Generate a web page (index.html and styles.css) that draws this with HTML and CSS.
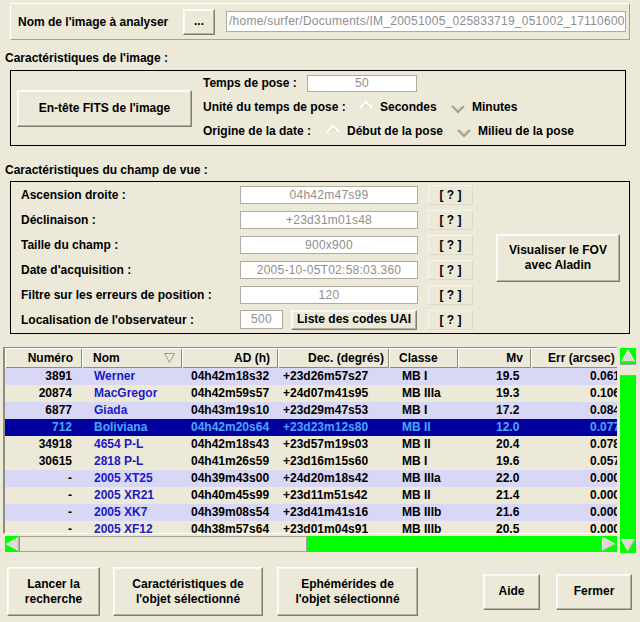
FILE: index.html
```html
<!DOCTYPE html>
<html lang="fr">
<head>
<meta charset="utf-8">
<title>Recherche d'objets</title>
<link rel="stylesheet" href="styles.css">
</head>
<body>
<div class="app">
  <div class="file-panel">
    <span class="file-label">Nom de l'image à analyser</span>
    <button class="btn btn-browse">...</button>
    <div class="field field-path">/home/surfer/Documents/IM_20051005_025833719_051002_17110600</div>
  </div>

  <div class="heading heading-image">Caractéristiques de l'image :</div>
  <div class="box box-image">
    <button class="btn btn-fits">En-tête FITS de l'image</button>
    <div class="image-fields">
      <div class="img-row">
        <span class="lbl lbl-pose">Temps de pose :</span>
        <div class="field field-pose">50</div>
      </div>
      <div class="img-row">
        <span class="lbl lbl-unit">Unité du temps de pose :</span>
        <span class="opt opt-sec"><svg class="diamond" viewBox="0 0 14 14" width="14" height="14"><path d="M1 8 L7 2 L13 8" fill="none" stroke="#ffffff" stroke-width="2"/><path d="M3.5 8 L7 4.5 L10.5 8" fill="none" stroke="#d4d1c2" stroke-width="1"/></svg>Secondes</span>
        <span class="opt"><svg class="diamond" viewBox="0 0 14 14" width="14" height="14"><path d="M1 6 L7 12 L13 6" fill="none" stroke="#a19f93" stroke-width="2"/><path d="M3.5 6 L7 9.5 L10.5 6" fill="none" stroke="#d4d1c2" stroke-width="1"/></svg>Minutes</span>
      </div>
      <div class="img-row">
        <span class="lbl lbl-origin">Origine de la date :</span>
        <span class="opt opt-debut"><svg class="diamond" viewBox="0 0 14 14" width="14" height="14"><path d="M1 8 L7 2 L13 8" fill="none" stroke="#ffffff" stroke-width="2"/><path d="M3.5 8 L7 4.5 L10.5 8" fill="none" stroke="#d4d1c2" stroke-width="1"/></svg>Début de la pose</span>
        <span class="opt"><svg class="diamond" viewBox="0 0 14 14" width="14" height="14"><path d="M1 6 L7 12 L13 6" fill="none" stroke="#a19f93" stroke-width="2"/><path d="M3.5 6 L7 9.5 L10.5 6" fill="none" stroke="#d4d1c2" stroke-width="1"/></svg>Milieu de la pose</span>
      </div>
    </div>
  </div>

  <div class="heading heading-fov">Caractéristiques du champ de vue :</div>
  <div class="box box-fov">
    <div class="fov-grid">
      <span class="lbl">Ascension droite :</span>
      <div class="field field-fov">04h42m47s99</div>
      <span></span>
      <span class="help">[ ? ]</span>

      <span class="lbl">Déclinaison :</span>
      <div class="field field-fov">+23d31m01s48</div>
      <span></span>
      <span class="help">[ ? ]</span>

      <span class="lbl">Taille du champ :</span>
      <div class="field field-fov">900x900</div>
      <span></span>
      <span class="help">[ ? ]</span>

      <span class="lbl">Date d'acquisition :</span>
      <div class="field field-fov">2005-10-05T02:58:03.360</div>
      <span></span>
      <span class="help">[ ? ]</span>

      <span class="lbl">Filtre sur les erreurs de position :</span>
      <div class="field field-fov">120</div>
      <span></span>
      <span class="help">[ ? ]</span>

      <span class="lbl">Localisation de l'observateur :</span>
      <div class="obs-cell">
        <div class="field field-obs">500</div>
        <button class="btn btn-uai">Liste des codes UAI</button>
      </div>
      <span></span>
      <span class="help">[ ? ]</span>
    </div>
    <button class="btn btn-fov">Visualiser le FOV<br>avec Aladin</button>
  </div>

  <div class="pane">
    <div class="viewport">
      <table class="grid">
        <colgroup>
          <col class="c-num"><col class="c-nom"><col class="c-ad"><col class="c-dec"><col class="c-cls"><col class="c-mv"><col class="c-err">
        </colgroup>
        <thead>
          <tr>
            <th class="h-num">Numéro</th>
            <th class="h-nom">Nom<svg class="sort" viewBox="0 0 11 10" width="11" height="10"><path d="M0.5 0.5 L10.5 0.5 L5.5 9.5 Z" fill="none" stroke="#9b9a92" stroke-width="1"/></svg></th>
            <th class="h-ad">AD (h)</th>
            <th class="h-dec">Dec. (degrés)</th>
            <th class="h-cls">Classe</th>
            <th class="h-mv">Mv</th>
            <th class="h-err">Err (arcsec)</th>
          </tr>
        </thead>
        <tbody>
          <tr class="alt"><td class="d-num">3891</td><td class="d-nom">Werner</td><td class="d-ad">04h42m18s32</td><td class="d-dec">+23d26m57s27</td><td class="d-cls">MB I</td><td class="d-mv">19.5</td><td class="d-err">0.061</td></tr>
          <tr><td class="d-num">20874</td><td class="d-nom">MacGregor</td><td class="d-ad">04h42m59s57</td><td class="d-dec">+24d07m41s95</td><td class="d-cls">MB IIIa</td><td class="d-mv">19.3</td><td class="d-err">0.106</td></tr>
          <tr class="alt"><td class="d-num">6877</td><td class="d-nom">Giada</td><td class="d-ad">04h43m19s10</td><td class="d-dec">+23d29m47s53</td><td class="d-cls">MB I</td><td class="d-mv">17.2</td><td class="d-err">0.084</td></tr>
          <tr class="sel"><td class="d-num">712</td><td class="d-nom">Boliviana</td><td class="d-ad">04h42m20s64</td><td class="d-dec">+23d23m12s80</td><td class="d-cls">MB II</td><td class="d-mv">12.0</td><td class="d-err">0.077</td></tr>
          <tr><td class="d-num">34918</td><td class="d-nom">4654 P-L</td><td class="d-ad">04h42m18s43</td><td class="d-dec">+23d57m19s03</td><td class="d-cls">MB II</td><td class="d-mv">20.4</td><td class="d-err">0.078</td></tr>
          <tr><td class="d-num">30615</td><td class="d-nom">2818 P-L</td><td class="d-ad">04h41m26s59</td><td class="d-dec">+23d16m15s60</td><td class="d-cls">MB I</td><td class="d-mv">19.6</td><td class="d-err">0.057</td></tr>
          <tr class="alt"><td class="d-num">-</td><td class="d-nom">2005 XT25</td><td class="d-ad">04h39m43s00</td><td class="d-dec">+24d20m18s42</td><td class="d-cls">MB IIIa</td><td class="d-mv">22.0</td><td class="d-err">0.000</td></tr>
          <tr><td class="d-num">-</td><td class="d-nom">2005 XR21</td><td class="d-ad">04h40m45s99</td><td class="d-dec">+23d11m51s42</td><td class="d-cls">MB II</td><td class="d-mv">21.4</td><td class="d-err">0.000</td></tr>
          <tr class="alt"><td class="d-num">-</td><td class="d-nom">2005 XK7</td><td class="d-ad">04h39m08s54</td><td class="d-dec">+23d41m41s16</td><td class="d-cls">MB IIIb</td><td class="d-mv">21.6</td><td class="d-err">0.000</td></tr>
          <tr><td class="d-num">-</td><td class="d-nom">2005 XF12</td><td class="d-ad">04h38m57s64</td><td class="d-dec">+23d01m04s91</td><td class="d-cls">MB IIIb</td><td class="d-mv">20.5</td><td class="d-err">0.000</td></tr>
        </tbody>
      </table>
    </div>

    <div class="vscroll">
      <div class="arrow arrow-up"><svg viewBox="0 0 16 16" width="16" height="16"><path d="M1.5 13.5 L8 2 L14.5 13.5 Z" fill="#dcdad0" stroke="#f4f3ee" stroke-width="1"/><path d="M1.5 13.5 L14.5 13.5" stroke="#a8a69c" stroke-width="1"/></svg></div>
      <div class="vthumb"></div>
      <div class="vtrack"></div>
      <div class="arrow arrow-down"><svg viewBox="0 0 16 16" width="16" height="16"><path d="M1.5 2.5 L14.5 2.5 L8 14 Z" fill="#dcdad0" stroke="#f4f3ee" stroke-width="1"/><path d="M14.5 2.5 L8 14" stroke="#a8a69c" stroke-width="1"/></svg></div>
    </div>

    <div class="hscroll">
      <div class="arrow arrow-left"><svg viewBox="0 0 15 16" width="15" height="16"><path d="M13.5 1.5 L1.5 8 L13.5 14.5 Z" fill="#dcdad0" stroke="#f4f3ee" stroke-width="1"/><path d="M13.5 1.5 L13.5 14.5" stroke="#a8a69c" stroke-width="1"/></svg></div>
      <div class="hthumb"></div>
      <div class="htrack"></div>
      <div class="arrow arrow-right"><svg viewBox="0 0 17 16" width="17" height="16"><path d="M2.5 1.5 L15 8 L2.5 14.5 Z" fill="#dcdad0" stroke="#f4f3ee" stroke-width="1"/><path d="M15 8 L2.5 14.5" stroke="#a8a69c" stroke-width="1"/></svg></div>
    </div>
  </div>

  <div class="actions">
    <button class="btn btn-big btn-lancer">Lancer la<br>recherche</button>
    <button class="btn btn-big btn-carac">Caractéristiques de<br>l'objet sélectionné</button>
    <button class="btn btn-big btn-ephem">Ephémérides de<br>l'objet sélectionné</button>
    <button class="btn btn-small btn-aide">Aide</button>
    <button class="btn btn-small btn-fermer">Fermer</button>
  </div>
</div>
</body>
</html>
```

FILE: styles.css
```css
html, body {
  margin: 0;
  padding: 0;
}

body {
  width: 640px;
  height: 622px;
  overflow: hidden;
  background: #ece9d8;
  color: #000;
  font: bold 12px "Liberation Sans", Arial, sans-serif;
}

.app {
  display: flex;
  flex-direction: column;
  align-items: flex-start;
}

/* ---------- generic widgets ---------- */
.btn {
  box-sizing: border-box;
  margin: 0;
  padding: 0;
  background: #ece9d8;
  color: #000;
  font: bold 12px "Liberation Sans", Arial, sans-serif;
  line-height: 15px;
  border: 1px solid;
  border-color: #ffffff #807e72 #807e72 #ffffff;
  box-shadow: inset -1px -1px 0 #b3b0a0, inset 1px 1px 0 #f8f7f1;
  text-align: center;
}

.field {
  box-sizing: border-box;
  background: #fff;
  border: 1px solid #aeaca0;
  color: #8e8e8e;
  font: normal 12px "Liberation Sans", Arial, sans-serif;
  letter-spacing: 0.25px;
  white-space: nowrap;
  overflow: hidden;
}

.lbl {
  white-space: nowrap;
}

/* ---------- file panel ---------- */
.file-panel {
  box-sizing: border-box;
  margin: 3px 0 0 10px;
  width: 620px;
  height: 37px;
  border: 1px solid;
  border-color: #ffffff #a4a192 #a4a192 #ffffff;
  display: flex;
  align-items: center;
  padding-left: 7px;
}

.file-label {
  flex: 0 0 165px;
  white-space: nowrap;
}

.btn-browse {
  width: 32px;
  height: 26px;
  flex: 0 0 32px;
}

.field-path {
  margin-left: 11px;
  width: 400px;
  height: 21px;
  line-height: 19px;
  padding-left: 2px;
}

/* ---------- headings ---------- */
.heading {
  margin-left: 5px;
  height: 14px;
  line-height: 14px;
  white-space: nowrap;
}

.heading-image {
  margin-top: 11px;
}

.heading-fov {
  margin-top: 17px;
}

/* ---------- image box ---------- */
.box {
  box-sizing: border-box;
  margin-left: 10px;
  border: 1px solid #000;
}

.box-image {
  margin-top: 5px;
  width: 616px;
  height: 76px;
  display: flex;
  align-items: center;
}

.btn-fits {
  margin-left: 6px;
  width: 175px;
  height: 37px;
  flex: 0 0 175px;
}

.image-fields {
  align-self: flex-start;
  margin-left: 11px;
  display: flex;
  flex-direction: column;
}

.img-row {
  height: 24px;
  display: flex;
  align-items: center;
}

.lbl-pose {
  width: 104px;
}

.lbl-unit {
  width: 156px;
}

.lbl-origin {
  width: 123px;
}

.field-pose {
  width: 110px;
  height: 17px;
  line-height: 15px;
  text-align: center;
}

.opt {
  display: flex;
  align-items: center;
  gap: 7px;
  white-space: nowrap;
}

.opt-sec {
  width: 92px;
}

.opt-debut {
  width: 131px;
}

.diamond {
  display: block;
  flex: 0 0 14px;
}

/* ---------- field of view box ---------- */
.box-fov {
  margin-top: 4px;
  width: 620px;
  height: 153px;
  display: flex;
  align-items: center;
}

.fov-grid {
  align-self: flex-start;
  padding-left: 10px;
  display: grid;
  grid-template-columns: 219px 178px 10px 45px;
  grid-auto-rows: 25px;
  align-items: center;
}

.field-fov {
  height: 18px;
  line-height: 16px;
  text-align: center;
}

.obs-cell {
  display: flex;
  align-items: center;
}

.field-obs {
  width: 43px;
  height: 19px;
  line-height: 17px;
  text-align: center;
}

.btn-uai {
  margin-left: 8px;
  width: 126px;
  height: 20px;
}

.help {
  box-sizing: border-box;
  height: 20px;
  line-height: 18px;
  text-align: center;
  border: 1px solid;
  border-color: #f6f5ef #dcd9c9 #dcd9c9 #f6f5ef;
  white-space: pre;
}

.btn-fov {
  margin-left: 23px;
  width: 124px;
  height: 48px;
}

/* ---------- table pane ---------- */
.pane {
  margin: 13px 0 0 3px;
  width: 633px;
  height: 207px;
  display: grid;
  grid-template-columns: 614px 16px;
  grid-template-rows: 187px 17px;
  column-gap: 3px;
  row-gap: 2px;
}

.viewport {
  box-sizing: border-box;
  grid-column: 1;
  grid-row: 1;
  overflow: hidden;
  border-top: 1px solid #8f8d82;
  border-left: 2px solid #8f8d82;
  border-bottom: 1px solid #ffffff;
  background: #ece9d8;
}

.grid {
  border-collapse: collapse;
  table-layout: fixed;
  width: 626px;
  font: bold 12px "Liberation Sans", Arial, sans-serif;
}

.c-num { width: 77px; }
.c-nom { width: 100px; }
.c-ad { width: 96px; }
.c-dec { width: 111px; }
.c-cls { width: 69px; }
.c-mv { width: 73px; }
.c-err { width: 100px; }

.grid th {
  box-sizing: border-box;
  height: 20px;
  padding: 0;
  font-weight: bold;
  white-space: nowrap;
  overflow: hidden;
  background: #ece9d8;
  box-shadow: inset 1px 1px 0 #ffffff, inset -1px -1px 0 #8f8d82;
  position: relative;
}

.h-num { text-align: right; padding-right: 9px !important; }
.h-nom { text-align: left; padding-left: 11px !important; }
.h-ad { text-align: right; padding-right: 8px !important; }
.h-dec { text-align: right; padding-right: 5px !important; }
.h-cls { text-align: left; padding-left: 10px !important; }
.h-mv { text-align: right; padding-right: 8px !important; }
.h-err { text-align: left; padding-left: 17px !important; }

.sort {
  position: absolute;
  right: 7px;
  top: 5px;
}

.grid td {
  height: 17px;
  padding: 0;
  line-height: 17px;
  white-space: nowrap;
  overflow: hidden;
}

.grid tbody tr {
  background: #ece9d8;
}

.grid tbody tr.alt {
  background: #d8d8f6;
}

.d-num { text-align: right; padding-right: 10px !important; }
.d-nom { padding-left: 12px !important; color: #1a1ac6; }
.d-ad { padding-left: 9px !important; }
.d-dec { padding-left: 5px !important; }
.d-cls { padding-left: 13px !important; }
.d-mv { padding-left: 38px !important; }
.d-err { text-align: right; padding-right: 11px !important; }

.grid tbody tr.sel {
  background: #00009e;
}

.grid tbody tr.sel td {
  color: #4aa6ff;
}

/* scrollbars */
.vscroll {
  grid-column: 2;
  grid-row: 1 / 3;
  margin-top: 1px;
  display: flex;
  flex-direction: column;
  background: #00ff00;
}

.hscroll {
  grid-column: 1;
  grid-row: 2;
  margin-left: 2px;
  display: flex;
  height: 16px;
  background: #00ff00;
}

.arrow {
  display: flex;
  align-items: center;
  justify-content: center;
  background: #00ff00;
}

.arrow svg {
  display: block;
}

.arrow-up,
.arrow-down {
  height: 16px;
  flex: 0 0 16px;
}

.vthumb {
  box-sizing: border-box;
  height: 12px;
  flex: 0 0 12px;
  background: #ece9d8;
  border-top: 1px solid #a6a498;
  border-bottom: 1px solid #a6a498;
}

.vtrack {
  flex: 1;
}

.arrow-left {
  width: 15px;
  flex: 0 0 15px;
}

.hthumb {
  box-sizing: border-box;
  width: 287px;
  flex: 0 0 287px;
  background: #ece9d8;
  border-top: 1px solid #a6a498;
  border-bottom: 1px solid #a6a498;
  border-right: 1px solid #a6a498;
}

.htrack {
  flex: 1;
}

.arrow-right {
  width: 17px;
  flex: 0 0 17px;
}

/* ---------- action buttons ---------- */
.actions {
  margin-top: 13px;
  padding-left: 7px;
  width: 633px;
  box-sizing: border-box;
  display: flex;
  align-items: center;
}

.btn-big {
  height: 49px;
}

.btn-small {
  height: 36px;
}

.btn-lancer { width: 93px; }
.btn-carac { width: 150px; margin-left: 13px; }
.btn-ephem { width: 141px; margin-left: 14px; }
.btn-aide { width: 57px; margin-left: 65px; }
.btn-fermer { width: 76px; margin-left: 16px; }
```
